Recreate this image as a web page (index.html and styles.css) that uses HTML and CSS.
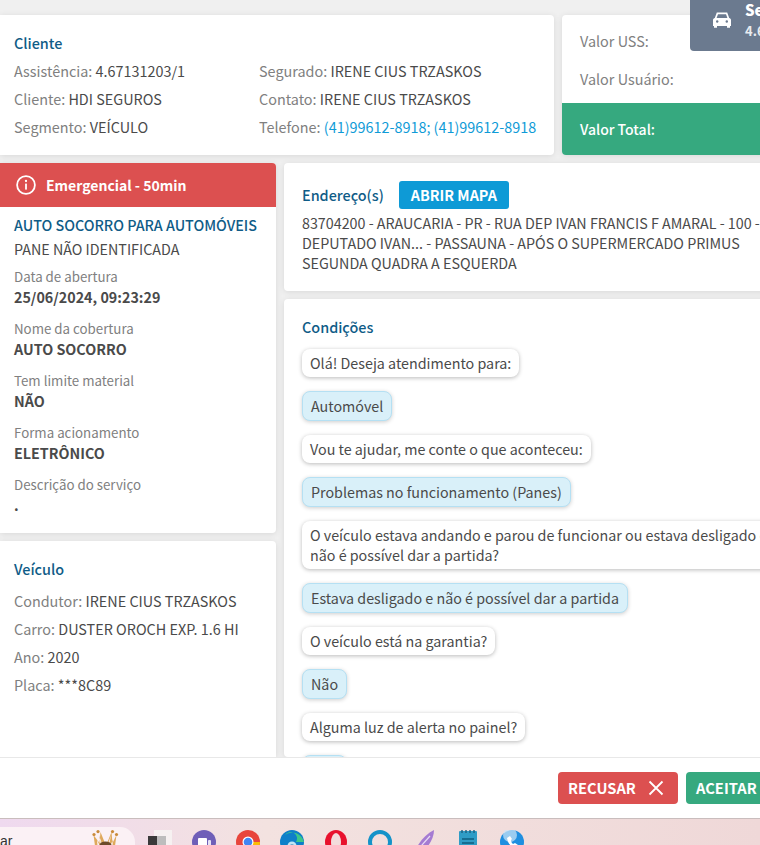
FILE: index.html
```html
<!DOCTYPE html>
<html lang="pt-BR">
<head>
<meta charset="utf-8">
<title>Assistência</title>
<link rel="stylesheet" href="styles.css">
</head>
<body>
<div class="screen">
  <main class="content">
    <section class="row top">
      <div class="card client">
        <h2 class="title">Cliente</h2>
        <div class="client-grid">
          <div class="field"><span class="lbl">Assistência:</span> 4.67131203/1</div>
          <div class="field"><span class="lbl">Segurado:</span> IRENE CIUS TRZASKOS</div>
          <div class="field"><span class="lbl">Cliente:</span> HDI SEGUROS</div>
          <div class="field"><span class="lbl">Contato:</span> IRENE CIUS TRZASKOS</div>
          <div class="field"><span class="lbl">Segmento:</span> VEÍCULO</div>
          <div class="field"><span class="lbl">Telefone:</span> <span class="phone">(41)99612-8918; (41)99612-8918</span></div>
        </div>
      </div>
      <div class="card values">
        <div class="values-body">
          <div class="lbl">Valor USS:</div>
          <div class="lbl">Valor Usuário:</div>
        </div>
        <div class="total">Valor Total:</div>
      </div>
    </section>
    <section class="row bottom">
      <div class="col left">
        <div class="card service">
          <div class="alert">
            <svg class="alert-icon" viewBox="0 0 20 20" width="20" height="20"><circle cx="10" cy="10" r="8.9" fill="none" stroke="#fff" stroke-width="1.8"/><rect x="9.1" y="8.6" width="1.8" height="6" fill="#fff"/><circle cx="10" cy="6" r="1.15" fill="#fff"/></svg>
            <span>Emergencial - 50min</span>
          </div>
          <div class="service-body">
            <div class="service-name">AUTO SOCORRO PARA AUTOMÓVEIS</div>
            <div class="service-sub">PANE NÃO IDENTIFICADA</div>
            <dl class="facts">
              <dt>Data de abertura</dt><dd>25/06/2024, 09:23:29</dd>
              <dt>Nome da cobertura</dt><dd>AUTO SOCORRO</dd>
              <dt>Tem limite material</dt><dd>NÃO</dd>
              <dt>Forma acionamento</dt><dd>ELETRÔNICO</dd>
              <dt>Descrição do serviço</dt><dd>.</dd>
            </dl>
          </div>
        </div>
        <div class="card vehicle">
          <h2 class="title">Veículo</h2>
          <div class="field"><span class="lbl">Condutor:</span> IRENE CIUS TRZASKOS</div>
          <div class="field"><span class="lbl">Carro:</span> DUSTER OROCH EXP. 1.6 HI</div>
          <div class="field"><span class="lbl">Ano:</span> 2020</div>
          <div class="field"><span class="lbl">Placa:</span> ***8C89</div>
        </div>
      </div>
      <div class="col right">
        <div class="card address">
          <div class="addr-head">
            <h2 class="title">Endereço(s)</h2>
            <span class="map-btn">ABRIR MAPA</span>
          </div>
          <p class="addr-text">83704200 - ARAUCARIA - PR - RUA DEP IVAN FRANCIS F AMARAL - 100 - DEPUTADO IVAN... - PASSAUNA - APÓS O SUPERMERCADO PRIMUS SEGUNDA QUADRA A ESQUERDA</p>
        </div>
        <div class="card conditions">
          <h2 class="title">Condições</h2>
          <div class="chat">
            <div class="bubble">Olá! Deseja atendimento para:</div>
            <div class="bubble answer">Automóvel</div>
            <div class="bubble">Vou te ajudar, me conte o que aconteceu:</div>
            <div class="bubble answer">Problemas no funcionamento (Panes)</div>
            <div class="bubble">O veículo estava andando e parou de funcionar ou estava desligado e<br>não é possível dar a partida?</div>
            <div class="bubble answer">Estava desligado e não é possível dar a partida</div>
            <div class="bubble">O veículo está na garantia?</div>
            <div class="bubble answer">Não</div>
            <div class="bubble">Alguma luz de alerta no painel?</div>
            <div class="bubble answer">Não</div>
          </div>
        </div>
      </div>
    </section>
  </main>
  <footer class="actions">
    <span class="btn refuse">RECUSAR
      <svg viewBox="0 0 16 16" width="16" height="16"><path d="M1.500 1.500l13 13M14.500 1.500l-13 13" stroke="#fff" stroke-width="1.800" fill="none"/></svg>
    </span>
    <span class="btn accept">ACEITAR</span>
  </footer>
  <div class="taskbar">
    <div class="search"><span class="search-text">ar</span>
      <svg class="crown" viewBox="0 0 27 16" width="27" height="16"><path d="M1.500 5l1.500 11h2.500l-.5-6 3 6h1l-2-11 3 9h6l3-9-2 11h1l3-6-.5 6h2.500l1.500-11-4 8 -1-11-4 10h-3l-4-10-1 11z" fill="#dfa95c"/><circle cx="2" cy="4.500" r="1.600" fill="#c98a3a"/><circle cx="6" cy="1.600" r="1.600" fill="#c98a3a"/><circle cx="20.500" cy="1.600" r="1.600" fill="#c98a3a"/><circle cx="24.500" cy="4.500" r="1.600" fill="#c98a3a"/><ellipse cx="13.500" cy="15" rx="6" ry="3.500" fill="#6d4a2a"/></svg>
    </div>
    <div class="tray">
      <svg class="tb-icon" viewBox="0 0 24 24" width="24" height="24"><rect x="6" y="0" width="18" height="24" fill="#f6f1f1"/><rect x="0" y="6" width="9" height="18" fill="#3a3a3a"/><rect x="9" y="6" width="9" height="18" fill="#bdbdbd"/></svg>
      <svg class="tb-icon" viewBox="0 0 24 24" width="24" height="24"><circle cx="12" cy="12" r="12" fill="#6f5fb8"/><rect x="6" y="8" width="9" height="16" rx="1" fill="#fff"/><rect x="16" y="10" width="3" height="10" rx="1" fill="#e6e2f5"/></svg>
      <svg class="tb-icon" viewBox="0 0 24 24" width="24" height="24"><circle cx="12" cy="12" r="12" fill="#e8453c"/><path d="M12 12L1.600 18A12 12 0 0 0 13 24z" fill="#34a853"/><path d="M12 12h12A12 12 0 0 1 13 24z" fill="#fbbc05"/><circle cx="12" cy="12" r="5.500" fill="#fff"/><circle cx="12" cy="12" r="4.300" fill="#4285f4"/></svg>
      <svg class="tb-icon" viewBox="0 0 24 24" width="24" height="24"><circle cx="12" cy="12" r="12" fill="#0f7fc9"/><path d="M5 5a12 12 0 0 1 19 7h-8a5 5 0 0 0-11-7z" fill="#3cc78a"/><circle cx="12" cy="16" r="4.500" fill="#bfe6f5"/><circle cx="12" cy="18" r="3.500" fill="#0c5a9c"/></svg>
      <svg class="tb-icon" viewBox="0 0 24 24" width="24" height="24"><ellipse cx="12" cy="12" rx="11" ry="12" fill="#e8112d"/><ellipse cx="12" cy="12" rx="5" ry="9" fill="#f3dcdc"/></svg>
      <svg class="tb-icon" viewBox="0 0 24 24" width="24" height="24"><circle cx="12" cy="12" r="10" fill="none" stroke="#1593c9" stroke-width="4"/></svg>
      <svg class="tb-icon" viewBox="0 0 24 24" width="24" height="24"><path d="M2 24C6 12 14 4 22 0c0 8-5 17-14 24z" fill="#a57bd2"/><path d="M2 24L18 6" stroke="#e9ddf5" stroke-width="1.200"/></svg>
      <svg class="tb-icon" viewBox="0 0 24 24" width="24" height="24"><rect x="3" y="1" width="18" height="23" rx="1" fill="#2f9cc6"/><path d="M6 0v3M10 0v3M14 0v3M18 0v3" stroke="#1b5f80" stroke-width="1.400"/><path d="M6 9h12M6 13h12M6 17h12M6 21h12" stroke="#0f5d80" stroke-width="1.400"/></svg>
      <svg class="tb-icon" viewBox="0 0 24 24" width="24" height="24"><circle cx="12" cy="12" r="12" fill="#1f8fe0"/><circle cx="10" cy="5" r="7" fill="#cfe6f7" opacity=".7"/><path d="M7 8c1 6 4 9 9 10l2-3-3-2-2 1c-1-1-2-2-2-4l1-1-2-3z" fill="#fff"/></svg>
    </div>
  </div>
  <aside class="notice">
    <svg class="notice-icon" viewBox="0 0 18 16" width="18" height="16"><path d="M3.800 0.500h10.400l2 5.500c1 .4 1.800 1 1.800 2v6h-1v1.800h-3v-1.800h-10v1.800h-3v-1.800h-1v-6c0-1 .8-1.600 1.800-2z M5 2.300L3.600 6h10.800l-1.400-3.700z" fill="#fff" fill-rule="evenodd"/><circle cx="4.200" cy="9.500" r="1.200" fill="#6b7a8f"/><circle cx="13.800" cy="9.500" r="1.200" fill="#6b7a8f"/></svg>
    <div class="notice-text"><strong class="notice-title">Serviço</strong><span class="notice-sub">4.67131203/1</span></div>
  </aside>
</div>
</body>
</html>
```
FILE: styles.css
```css
* { box-sizing: border-box; }
html, body { margin: 0; padding: 0; }
body {
  width: 760px;
  height: 845px;
  overflow: hidden;
  font-family: "Noto Sans CJK SC", "Noto Sans CJK JP", sans-serif;
  font-size: 14.4px;
  line-height: 20px;
  color: #4a4a4a;
  background: #f0f0f0;
}
.screen { position: relative; width: 760px; height: 845px; overflow: hidden; display: flex; flex-direction: column; }
.content { flex: 1; min-height: 0; overflow: hidden; width: 800px; padding-top: 15px; display: flex; flex-direction: column; gap: 8px; }
.row { display: flex; gap: 8px; }
.top { height: 140px; flex: none; }
.bottom { flex: 1; min-height: 0; }
.card { background: #fff; border-radius: 4px; box-shadow: 0 1px 6px rgba(0, 0, 0, .10); }
.title { margin: 0; font-size: 14.4px; font-weight: 500; line-height: 20px; color: #0f5c87; }
.lbl { color: #808080; }
.field { line-height: 28px; white-space: nowrap; }
.client { width: 554px; padding: 18px 14px 0; border-radius: 0 4px 4px 0; }
.client-grid { display: grid; grid-template-columns: 245px 1fr; }
.client .title { margin-bottom: 4px; }
.phone { color: #0f9bd7; }
.values { width: 238px; overflow: hidden; display: flex; flex-direction: column; }
.values-body { flex: 1; padding: 16px 18px 0; display: flex; flex-direction: column; gap: 18px; }
.total { height: 52px; background: #36a97f; color: #fff; font-weight: 500; font-size: 14px; padding: 0 18px; display: flex; align-items: center; }
.col { display: flex; flex-direction: column; gap: 8px; min-height: 0; }
.left { width: 276px; flex: none; }
.right { width: 516px; flex: none; }
.service { height: 370px; flex: none; border-radius: 0 4px 4px 0; overflow: hidden; }
.alert { height: 44px; background: #dc5050; color: #fff; font-weight: 700; font-size: 14px; display: flex; align-items: center; gap: 10px; padding-left: 16px; }
.alert-icon { flex: none; }
.service-body { padding: 6px 14px 0; }
.service-name { color: #0f5c87; font-weight: 500; font-size: 14.3px; line-height: 24px; white-space: nowrap; }
.service-sub { line-height: 24px; font-size: 14.3px; }
.facts { margin: 6px 0 0; }
.facts dt { font-size: 13.3px; line-height: 20px; color: #808080; }
.facts dd { margin: 0 0 12px; font-size: 14.3px; font-weight: 700; line-height: 20px; color: #4a4a4a; }
.vehicle { flex: 1; padding: 18px 14px 0; border-radius: 0 4px 0 0; }
.vehicle .title { margin-bottom: 8px; }
.address { height: 128px; flex: none; padding: 18px 18px 0; }
.addr-head { display: flex; align-items: center; gap: 15px; height: 28px; }
.map-btn { background: #0e9ad6; color: #fff; font-weight: 700; font-size: 14.4px; height: 28px; line-height: 28px; width: 110px; text-align: center; border-radius: 3px; }
.addr-text { margin: 4px 0 0; width: 470px; font-size: 14.3px; line-height: 20px; }
.conditions { flex: 1; min-height: 0; overflow: hidden; padding: 18px 18px 0; }
.chat { display: flex; flex-direction: column; align-items: flex-start; gap: 14px; margin-top: 12px; }
.bubble { background: #fff; border-radius: 8px; padding: 4px 8px; font-size: 14.3px; line-height: 20px; box-shadow: 0 1px 4px rgba(0, 0, 0, .28); white-space: nowrap; }
.answer { background: #d9f0f9; border: 1px solid #b5e0f3; padding: 4px 8px; box-shadow: 0 1px 4px rgba(0, 0, 0, .2); }
.actions { flex: none; height: 61px; background: #fff; border-top: 1px solid #e8e8e8; width: 800px; display: flex; justify-content: flex-end; align-items: center; gap: 8px; padding: 0 0 1px; position: relative; z-index: 1; }
.btn { height: 32px; border-radius: 4px; color: #fff; font-weight: 700; font-size: 14.7px; display: flex; align-items: center; padding: 0 10px; }
.refuse { background: #dc5050; gap: 12px; width: 120px; }
.accept { background: #36a97f; width: 114px; }
.taskbar { flex: none; height: 27px; display: flex; background: linear-gradient(90deg, #efd9ef 0%, #f3e2e0 35%, #efd8d8 100%); border-top: 1px solid #c9bdbd; overflow: hidden; position: relative; z-index: 1; }
.search { width: 135px; height: 30px; margin-top: 8px; background: #fbf1f5; border-radius: 0 15px 0 0; display: flex; justify-content: flex-end; position: relative; }
.search-text { position: absolute; left: 0; top: 4px; font-family: "Liberation Sans", sans-serif; font-size: 14px; color: #333; }
.crown { margin: 3px 16px 0 0; }
.tray { display: flex; gap: 20px; padding: 11px 0 0 13px; }
.tb-icon { flex: none; }
.notice { position: absolute; top: 0; left: 690px; width: 200px; height: 51px; background: #6b7a8f; border-radius: 0 0 0 4px; color: #fff; display: flex; align-items: center; gap: 14px; padding-left: 23px; z-index: 2; }
.notice-icon { flex: none; margin-top: -11px; }
.notice-text { display: flex; flex-direction: column; font-weight: 700; margin-top: -12px; }
.notice-title { font-size: 15px; line-height: 22px; white-space: nowrap; }
.notice-sub { font-size: 13px; line-height: 20px; color: #e8ebef; white-space: nowrap; }
```
